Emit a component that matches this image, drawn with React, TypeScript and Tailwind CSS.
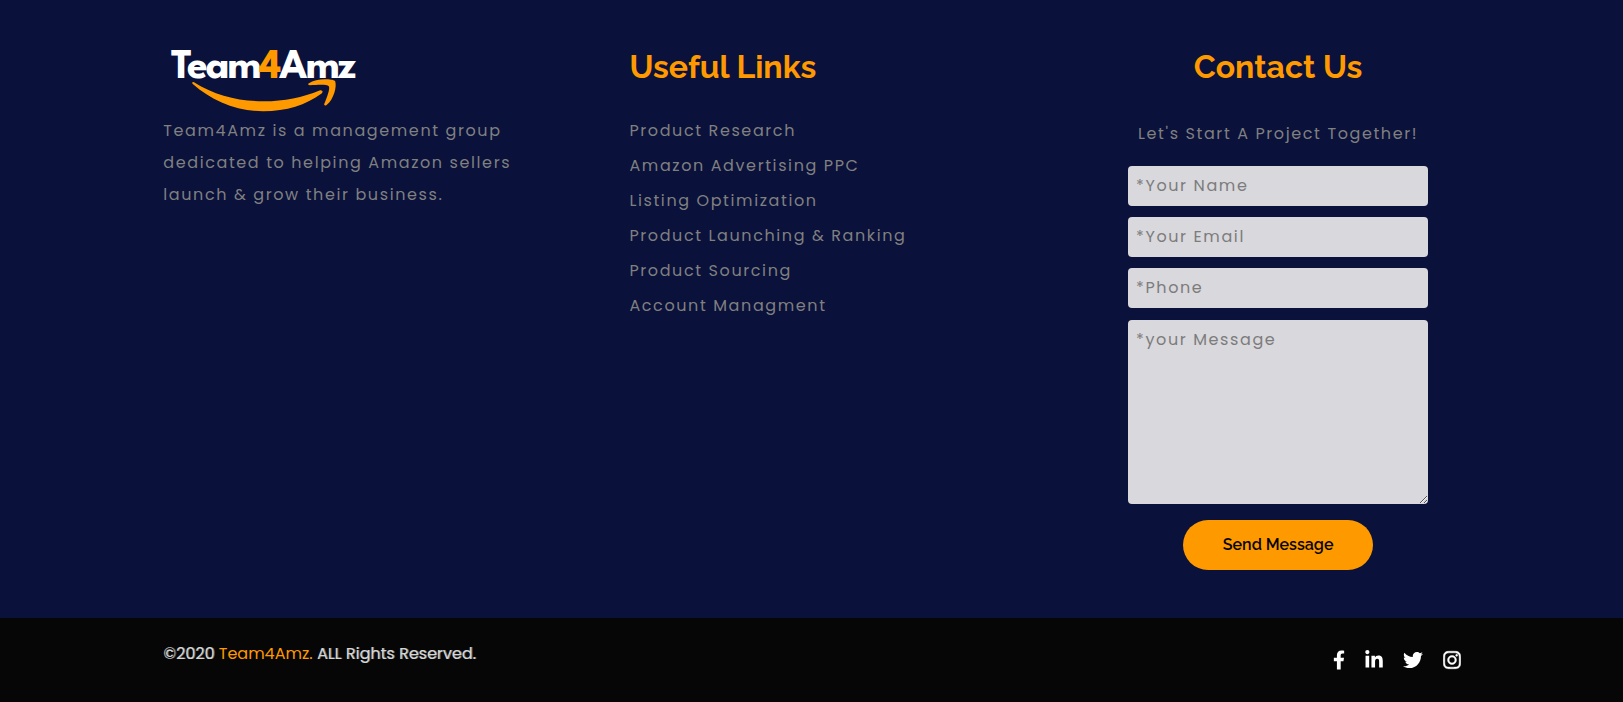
import { FaFacebookF, FaInstagram, FaLinkedinIn, FaTwitter } from "react-icons/fa";

const links = [
  "Product Research",
  "Amazon Advertising PPC",
  "Listing Optimization",
  "Product Launching & Ranking",
  "Product Sourcing",
  "Account Managment",
];

const fields = [
  { id: "name", type: "text", label: "*Your Name" },
  { id: "email", type: "email", label: "*Your Email" },
  { id: "phone", type: "tel", label: "*Phone" },
];

const socials = [
  { name: "Facebook", Icon: FaFacebookF, size: "h-5 w-3" },
  { name: "LinkedIn", Icon: FaLinkedinIn, size: "h-5 w-[18px]" },
  { name: "Twitter", Icon: FaTwitter, size: "h-5 w-5" },
  { name: "Instagram", Icon: FaInstagram, size: "h-5 w-[18px] stroke-white stroke-[12]" },
];

const fieldClass =
  "block w-full rounded border-0 bg-[#d9d8dd] px-2 text-base tracking-widest text-gray-800 placeholder:text-[#7c7c7c]";

const headingClass =
  "font-['Raleway','Lato',sans-serif] text-[32px] leading-10 font-bold text-[#ff9900]";

function Logo() {
  return (
    <svg width="240" height="68" viewBox="0 0 240 68" role="img" aria-label="Team4Amz">
      <text
        x="8"
        y="31"
        fill="#ffffff"
        fontSize="42"
        className="font-['League_Spartan','Jost','Outfit','Urbanist','Lato',sans-serif] font-bold tracking-tighter"
      >
        Team<tspan fill="#ff9900">4</tspan>Amz
      </text>
      <path
        fill="#ff9900"
        d="M31 35.2C52 48.5 76 54.4 101 54.3C121 54.2 140 50.2 156.5 43.4C159 42.4 160.8 44.8 158.6 46.5C143 58 123 64.4 100 64.3C73 64.1 48.5 53.5 29.8 37C28.6 35.9 29.6 34.3 31 35.2Z"
      />
      <path
        fill="#ff9900"
        d="M145.500 36.600C150.500 32.900 157 32 163.500 32.200C168 32.400 171.800 32.900 172.300 34.400C173.700 39.500 171.300 51.500 163.600 58C162.300 59.100 160.700 58.400 161.300 56.800C163.800 50.600 167.400 41.400 165.800 39.200C164 36.900 154 37.700 147 38.200C145.300 38.300 144.700 37.300 145.500 36.600Z"
      />
    </svg>
  );
}

export default function App() {
  return (
    <footer className="min-h-screen bg-[#060606] font-['Poppins','Inter',sans-serif] text-base">
      <div className="bg-[#0a113b] pt-[47px] pb-12">
        <div className="mx-auto grid w-4/5 grid-cols-3 gap-[101px] pl-px">
          <section>
            <Logo />
            <p className="leading-8 tracking-widest text-[#808080]">
              Team4Amz is a management group dedicated to helping Amazon sellers launch &amp; grow
              their business.
            </p>
          </section>

          <nav aria-labelledby="useful-links">
            <h2 id="useful-links" className={headingClass}>
              Useful Links
            </h2>
            <ul className="mt-[26px]">
              {links.map((link) => (
                <li key={link} className="leading-[35px] tracking-widest">
                  <a href="#" className="whitespace-nowrap text-[#808080]">
                    {link}
                  </a>
                </li>
              ))}
            </ul>
          </nav>

          <section className="flex flex-col items-center">
            <h2 className={headingClass}>Contact Us</h2>
            <p className="mt-[31px] leading-8 tracking-widest whitespace-nowrap text-[#808080]">
              Let's Start A Project Together!
            </p>
            <form className="mt-4 flex w-full max-w-[300px] flex-col items-center">
              <div className="mb-3 flex w-full flex-col gap-[11px]">
                {fields.map(({ id, type, label }) => (
                  <input
                    key={id}
                    id={id}
                    type={type}
                    aria-label={label}
                    placeholder={label}
                    className={`${fieldClass} h-10 pb-0.5`}
                  />
                ))}
              </div>
              <textarea
                id="message"
                aria-label="*your Message"
                placeholder="*your Message"
                className={`${fieldClass} h-[184px] resize py-2`}
              />
              <button
                type="button"
                className="mt-4 h-[50px] w-[190px] rounded-full bg-[#ff9900] font-['Raleway','Lato',sans-serif] font-semibold text-[#060606]"
              >
                Send Message
              </button>
            </form>
          </section>
        </div>
      </div>

      <div className="mx-auto flex w-4/5 justify-between pt-6 pb-8 pl-px">
        <p className="leading-6 text-[#d6d6d6] [text-shadow:1px_0_0_#d6d6d680]">
          ©2020{" "}
          <a href="#" className="text-[#ff9900] [text-shadow:none]">
            Team4Amz.
          </a>{" "}
          ALL Rights Reserved.
        </p>
        <ul className="flex items-center gap-5 pt-2 text-white">
          {socials.map(({ name, Icon, size }) => (
            <li key={name}>
              <a href="#" aria-label={name}>
                <Icon className={size} />
              </a>
            </li>
          ))}
        </ul>
      </div>
    </footer>
  );
}
